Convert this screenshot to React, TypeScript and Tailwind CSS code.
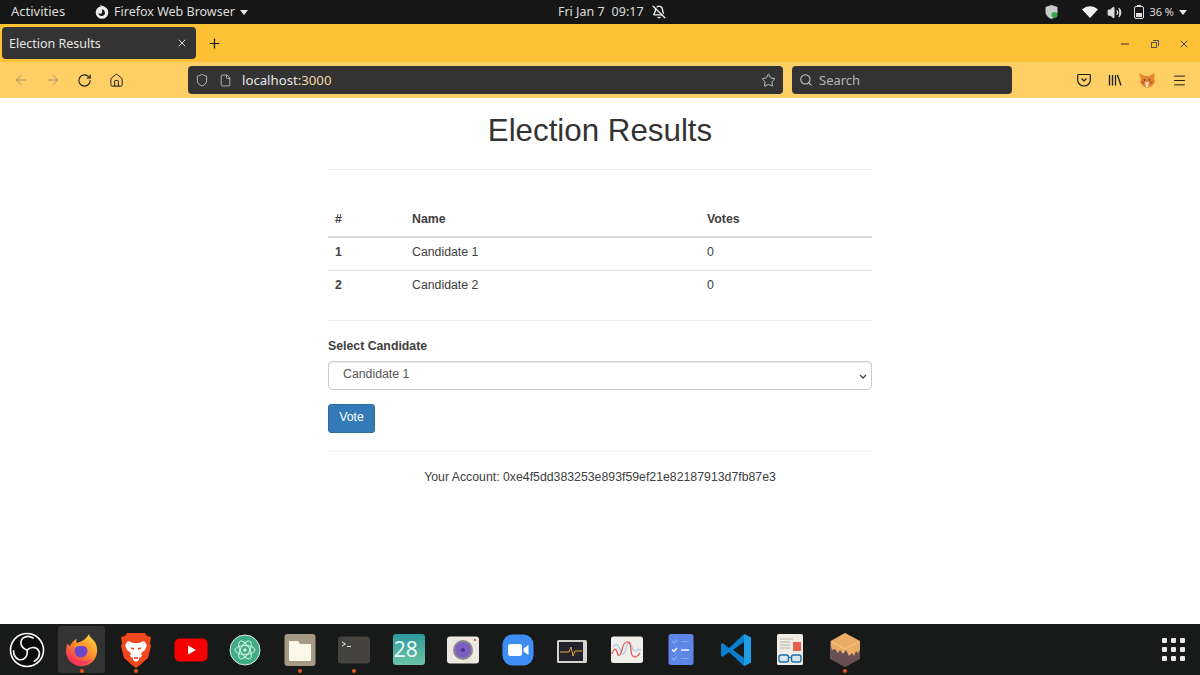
import { ArrowLeft, ArrowRight, RotateCw, Home, Shield, File, Star, Search, Menu, X, Plus, BellOff, Volume2 } from 'lucide-react';

const ObsIcon = () => (
    <svg width="40" height="40" viewBox="0 0 40 40" fill="none">
        <circle cx="20" cy="20" r="16.5" fill="#0c0c0c" stroke="#fff" strokeWidth="1.6" />
        <g stroke="#f2f2f2" strokeWidth="1.7" strokeLinecap="round">
            <path d="M20 20c-6-2-8-8-4-12 3-2 7-2 10 0" />
            <path d="M20 20c-6-2-8-8-4-12 3-2 7-2 10 0" transform="rotate(120 20 20)" />
            <path d="M20 20c-6-2-8-8-4-12 3-2 7-2 10 0" transform="rotate(240 20 20)" />
        </g>
    </svg>
);

const FirefoxIcon = () => (
    <svg width="40" height="40" viewBox="0 0 40 40" fill="none">
        <defs>
            <linearGradient id="ffOuter" x1="30" y1="6" x2="8" y2="34" gradientUnits="userSpaceOnUse">
                <stop stopColor="#ffd23a" />
                <stop offset="0.45" stopColor="#ff8a2b" />
                <stop offset="1" stopColor="#f0245f" />
            </linearGradient>
        </defs>
        <path d="M27 4c1 4 3 4 6 8 3 5 3 13-1 18-4 5-10 7-15 6C10 35 4 29 4 21c0-4 1-6 2-8 0 2 1 3 2 3 1-3 4-6 7-7-1 2-1 3 0 4 3-1 9-3 12-9z" fill="url(#ffOuter)" />
        <circle cx="19" cy="21" r="6.500" fill="#6c46c8" />
        <path d="M12 17c2-4 7-6 11-4 3 1 5 4 5 7-2-3-5-4-8-4-3 0-5 0-8 1z" fill="#ff9a2e" />
        <path d="M8 24c1 6 6 10 12 10 4 0 8-2 10-5-3 2-7 3-11 2-5-1-9-3-11-7z" fill="#f4395f" />
    </svg>
);

const BraveIcon = () => (
    <svg width="40" height="40" viewBox="0 0 40 40" fill="none">
        <path d="M11 3h18l2 3 4 1-1 6 1 3-3 12-8 7-4 3-4-3-8-7-3-12 1-3-1-6 4-1z" fill="#f1491d" />
        <path d="M12 11l5 2h6l5-2 3 4-2 5-4 3 1 3-3 2v2l-3 2-3-2v-2l-3-2 1-3-4-3-2-5z" fill="#fff" />
        <path d="M15 18l3 1M25 18l-3 1M18 28h4" stroke="#f1491d" strokeWidth="1.400" />
    </svg>
);

const YoutubeIcon = () => (
    <svg width="40" height="40" viewBox="0 0 40 40" fill="none">
        <rect x="3.500" y="8.500" width="33" height="23" rx="5" fill="#f60002" />
        <path d="M17 15.500l8 4.500-8 4.500z" fill="#fff" />
    </svg>
);

const AtomIcon = () => (
    <svg width="40" height="40" viewBox="0 0 40 40" fill="none">
        <circle cx="20" cy="20" r="15" fill="#3fae86" stroke="#d8ebe2" strokeWidth="1" />
        <g stroke="#d5efe3" strokeWidth="1" fill="none">
            <ellipse cx="20" cy="20" rx="10" ry="4.500" />
            <ellipse cx="20" cy="20" rx="10" ry="4.500" transform="rotate(60 20 20)" />
            <ellipse cx="20" cy="20" rx="10" ry="4.500" transform="rotate(120 20 20)" />
        </g>
        <circle cx="20" cy="20" r="1.600" fill="#e6f6ee" />
    </svg>
);

const FilesIcon = () => (
    <svg width="40" height="40" viewBox="0 0 40 40" fill="none">
        <rect x="4.500" y="4" width="31" height="32" rx="3" fill="#a69a87" />
        <path d="M9 11h9l2 3h11v16a1 1 0 01-1 1H10a1 1 0 01-1-1z" fill="#fbf8ea" />
    </svg>
);

const TerminalIcon = () => (
    <svg width="40" height="40" viewBox="0 0 40 40" fill="none">
        <rect x="4" y="6.500" width="32" height="27" rx="3" fill="#45433f" />
        <path d="M8 12l3.500 2L8 16" stroke="#e8e8e8" strokeWidth="1" />
        <path d="M13 16.500h4" stroke="#e8e8e8" strokeWidth="1" />
    </svg>
);

const CalendarIcon = () => (
    <div className="w-[32px] h-[31px] rounded-[3px] bg-gradient-to-b from-[#2a9a9c] to-[#6cc4a4] flex items-center pl-[1px] overflow-hidden">
        <span className="text-[#eaf6f2] text-[21px] leading-none font-['Noto_Sans',sans-serif]">28</span>
    </div>
);

const CameraIcon = () => (
    <svg width="40" height="40" viewBox="0 0 40 40" fill="none">
        <rect x="4" y="6.500" width="32" height="27" rx="3" fill="#ece8e2" />
        <circle cx="20" cy="20" r="10" fill="#8d8a88" />
        <circle cx="20" cy="20" r="8" fill="#7d5fc4" />
        <circle cx="20" cy="20" r="2" fill="#4d3590" />
        <circle cx="32" cy="10" r="1" fill="#e8383d" />
    </svg>
);

const ZoomIcon = () => (
    <svg width="40" height="40" viewBox="0 0 40 40" fill="none">
        <rect x="4.500" y="4.500" width="31" height="31" rx="10" fill="#3e8df3" />
        <rect x="10" y="14" width="14" height="12" rx="2.500" fill="#fff" />
        <path d="M25.500 18.500l5-3.500v10l-5-3.500z" fill="#fff" />
    </svg>
);

const MonitorIcon = () => (
    <svg width="40" height="40" viewBox="0 0 40 40" fill="none">
        <rect x="5" y="10" width="30" height="23" rx="1.500" fill="#d5d3cd" />
        <rect x="7" y="12" width="24" height="19" fill="#23232b" />
        <path d="M8 22h9l2-5 2 9 2-5h7" stroke="#e0a542" strokeWidth="1" />
    </svg>
);

const GraphIcon = () => (
    <svg width="40" height="40" viewBox="0 0 40 40" fill="none">
        <rect x="4" y="6.500" width="32" height="26.500" rx="2.500" fill="#f0eeea" />
        <path d="M6 17c3-4 5-3 7 2s3 7 5 3 1-9 4-9 3 8 6 8 3-3 6-1" stroke="#9fc9e6" strokeWidth="1.100" />
        <path d="M5 24c2-6 4-6 5-2s2 5 4 1 1-10 6-11 3 10 5 13 5 3 8-2" stroke="#e3514c" strokeWidth="1.200" />
    </svg>
);

const TasksIcon = () => (
    <svg width="40" height="40" viewBox="0 0 40 40" fill="none">
        <rect x="7.500" y="4" width="25" height="31" rx="2.500" fill="#5d86e6" />
        <path d="M11 11l2 2 3-3.500M11 28l2 2 3-3.500" stroke="#86a6ee" strokeWidth="1.200" />
        <path d="M11 19.500l2 2 3-3.500" stroke="#fff" strokeWidth="1.300" />
        <path d="M20 11.500h8M20 28.500h8" stroke="#86a6ee" strokeWidth="1.200" />
        <path d="M20 20h8" stroke="#fff" strokeWidth="1.400" />
    </svg>
);

const VscodeIcon = () => (
    <svg width="40" height="40" viewBox="0 0 40 40" fill="none">
        <path d="M28 4l7 3.500v25L28 36 13 22l-6.500 5L5 25.500V14.500L6.500 13l6.500 5z" fill="#0a7fd0" />
        <path d="M28 12L17 20l11 8z" fill="#181919" />
        <path d="M28 4l7 3.500v25L28 36z" fill="#1f9ce6" />
    </svg>
);

const DocsIcon = () => (
    <svg width="40" height="40" viewBox="0 0 40 40" fill="none">
        <rect x="7" y="4" width="26" height="31" rx="1.500" fill="#efece6" />
        <path d="M10 9h13M10 12h10M10 15h10M10 18h10" stroke="#b8b3a8" strokeWidth="1" />
        <rect x="23" y="12" width="8" height="9" fill="#e8604c" />
        <rect x="9" y="25" width="9.500" height="7" rx="2" fill="#d9e5ee" stroke="#1e6fa8" strokeWidth="1.400" />
        <rect x="21.500" y="25" width="9.500" height="7" rx="2" fill="#d9e5ee" stroke="#1e6fa8" strokeWidth="1.400" />
        <path d="M18.500 27.500h3" stroke="#1e6fa8" strokeWidth="1.200" />
    </svg>
);

const CubeIcon = () => (
    <svg width="40" height="40" viewBox="0 0 40 40" fill="none">
        <path d="M20 3l15 8v18l-15 8-15-8V11z" fill="#685054" />
        <path d="M20 3l15 8v9l-2 3-2-2-2 5-2-3-3 3-3-6-3 4-3-4-2 3-3-4-3 1-1-4V11z" fill="#e9ad66" />
        <path d="M7 12l13 7 13-7" stroke="#f5cf96" strokeWidth="0.800" />
    </svg>
);

const FoxIcon = () => (
    <svg width="16" height="16" viewBox="0 0 16 16" fill="none">
        <path d="M0 1l6 3h4l6-3-1 6 1 3-3 4-3 1.500H7L4 14l-3-4 1-3z" fill="#e88332" />
        <path d="M2 9l4 1-2 3zM14 9l-4 1 2 3z" fill="#c9641f" />
        <path d="M6 10h4l-1 5H7z" fill="#f2dcc4" />
        <circle cx="5.500" cy="8" r="0.800" fill="#333" />
        <circle cx="10.500" cy="8" r="0.800" fill="#333" />
    </svg>
);

const dockItems = [
    { icon: <ObsIcon />, running: false },
    { icon: <FirefoxIcon />, running: true, active: true },
    { icon: <BraveIcon />, running: true },
    { icon: <YoutubeIcon />, running: false },
    { icon: <AtomIcon />, running: false },
    { icon: <FilesIcon />, running: true },
    { icon: <TerminalIcon />, running: true },
    { icon: <CalendarIcon />, running: false },
    { icon: <CameraIcon />, running: false },
    { icon: <ZoomIcon />, running: false },
    { icon: <MonitorIcon />, running: false },
    { icon: <GraphIcon />, running: false },
    { icon: <TasksIcon />, running: false },
    { icon: <VscodeIcon />, running: false },
    { icon: <DocsIcon />, running: false },
    { icon: <CubeIcon />, running: true },
];

const TopBar = () => (
    <div className="h-[24px] shrink-0 bg-[#161616] text-[#dcdcdc] text-[12.500px] flex items-center font-['Noto_Sans',sans-serif]">
        <span className="ml-[11px] w-[84px] text-[13px]">Activities</span>
        <svg width="14" height="14" viewBox="0 0 14 14" fill="none">
            <circle cx="7" cy="7.500" r="6.300" fill="#eee" />
            <path d="M6.500 4.500a3.200 3.200 0 11-3 3.500c1 1 3 1 3.500 0 .5-1 0-2.500-.5-3.500z" fill="#161616" />
            <path d="M5 0l4 1.500 1 3-3-.5z" fill="#eee" />
        </svg>
        <span className="ml-[5px]">Firefox Web Browser</span>
        <span className="ml-[5px] w-0 h-0 border-x-[4px] border-x-transparent border-t-[5px] border-t-[#e8e8e8]" />
        <span className="ml-[310px]">Fri Jan 7</span>
        <span className="ml-[7px]">09:17</span>
        <BellOff size={14} className="ml-[8px] text-[#eee]" strokeWidth={2.400} />
        <div className="ml-auto flex items-center">
            <svg width="14" height="16" viewBox="0 0 14 16" fill="none">
                <path d="M6.500 1l6 2v5c0 3-3 6-6 7-3-1-6-4-6-7V3z" fill="#c9c9c9" />
                <circle cx="9.500" cy="11" r="3" fill="#2fa84f" />
            </svg>
            <svg className="ml-[23px]" width="16" height="12" viewBox="0 0 16 12" fill="none">
                <path d="M0 3.500C4.500-1 11.500-1 16 3.500L8 12z" fill="#eee" />
            </svg>
            <Volume2 size={15} fill="currentColor" className="ml-[9px] text-[#ddd]" />
            <svg className="ml-[12px]" width="10" height="14" viewBox="0 0 10 14" fill="none">
                <rect x="0.500" y="1.500" width="9" height="12" rx="1.500" stroke="#ddd" />
                <rect x="3" y="0" width="4" height="1.500" fill="#ddd" />
                <rect x="2" y="8" width="6" height="4" fill="#ddd" />
            </svg>
            <span className="ml-[5px] text-[11px]">36 %</span>
            <span className="ml-[5px] mr-[13px] w-0 h-0 border-x-[4px] border-x-transparent border-t-[5px] border-t-[#e8e8e8]" />
        </div>
    </div>
);

const TabBar = () => (
    <div className="h-[38px] shrink-0 bg-[#fdc136] flex items-center font-['Noto_Sans',sans-serif]">
        <div className="ml-[2px] w-[194px] h-[32px] rounded-[4px] bg-[#333333] flex items-center pl-[7px] pr-[8px] pt-[2px] text-[#e6e6e6] text-[12.500px]">
            <span>Election Results</span>
            <X size={12} className="ml-auto -mt-[2px] text-[#d8d8d8]" />
        </div>
        <Plus size={15} strokeWidth={1.900} className="ml-[11px] mt-[1px] text-[#111]" />
        <div className="ml-auto mr-[10px] mt-[2px] flex items-center text-[#555]">
            <span className="w-[8px] h-[1.500px] bg-[#a0703a]" />
            <span className="relative ml-[22px] w-[8px] h-[8px]">
                <span className="absolute left-0 bottom-0 w-[6px] h-[6px] border border-[#555]" />
                <span className="absolute right-0 top-0 w-[6px] h-[6px] border-t border-r border-[#555]" />
            </span>
            <X size={12} className="ml-[19px] text-[#444]" />
        </div>
    </div>
);

const ToolBar = () => (
    <div className="h-[36px] shrink-0 bg-[#fdcf64] flex items-center font-['Noto_Sans',sans-serif]">
        <div className="w-[188px] flex items-center pl-[13px]">
            <ArrowLeft size={16} strokeWidth={1.400} className="text-[#a8926a]" />
            <ArrowRight size={16} strokeWidth={1.400} className="ml-[16px] text-[#a8926a]" />
            <RotateCw size={15} strokeWidth={1.800} className="ml-[16px] text-[#222]" />
            <Home size={15} strokeWidth={1.600} className="ml-[17px] text-[#222]" />
        </div>
        <div className="w-[595px] h-[28px] rounded-[4px] bg-[#333333] flex items-center pl-[7px] pr-[7px] text-[#e8e8e8] text-[13.200px]">
            <Shield size={14} strokeWidth={1.500} className="text-[#ccc]" />
            <File size={13} strokeWidth={1.500} className="ml-[10px] text-[#ccc]" />
            <span className="ml-[10px] mt-[1px]">
                localhost<span className="text-[#f1d9a8]">:3000</span>
            </span>
            <Star size={15} strokeWidth={1.500} className="ml-auto text-[#ccc]" />
        </div>
        <div className="ml-[9px] w-[220px] h-[28px] rounded-[4px] bg-[#333333] flex items-center pl-[7px] text-[#b5b5b5] text-[13px]">
            <Search size={14} strokeWidth={1.800} className="text-[#ccc]" />
            <span className="ml-[6px] mt-[1px]">Search</span>
        </div>
        <div className="ml-auto flex items-center mr-[13px] text-[#222]">
            <svg width="14" height="14" viewBox="0 0 14 14" fill="none" stroke="currentColor" strokeWidth="1.200">
                <path d="M1.500 1.500h11a.8.8 0 01.8.8V7a6.300 6 0 01-12.600 0V2.300a.8.8 0 01.8-.8z" />
                <path d="M4.500 5.500L7 8l2.500-2.500" />
            </svg>
            <svg className="ml-[17px]" width="14" height="14" viewBox="0 0 14 14" fill="none" stroke="currentColor" strokeWidth="1.300">
                <path d="M1.500 2v10.500M4.500 2v10.500M7.500 2v10.500M9.500 2l3.500 10.500" />
            </svg>
            <span className="ml-[17px]"><FoxIcon /></span>
            <Menu size={15} strokeWidth={1.600} className="ml-[17px]" />
        </div>
    </div>
);

const candidates = [
    { id: 1, name: 'Candidate 1', votes: 0, rowClass: 'h-[33px] border-b border-[#dddddd]', cellClass: 'pb-[3px]' },
    { id: 2, name: 'Candidate 2', votes: 0, rowClass: 'h-[31px]', cellClass: 'pb-[1px]' },
];

const Page = () => (
    <div className="flex-1 bg-white text-[#404040] text-[12.300px] font-['Liberation_Sans',Arial,sans-serif] overflow-hidden">
        <div className="w-[544px] mx-auto">
            <h1 className="text-center text-[31.300px] leading-[34px] mt-[16px] text-[#333333]">Election Results</h1>
            <div className="mt-[21px] border-t border-[#eeeeee]" />
            <table className="mt-[32px] w-full table-fixed">
                <thead>
                    <tr className="border-b-2 border-[#dddddd] text-left">
                        <th className="w-[76px] h-[35px] px-[7px] font-bold">#</th>
                        <th className="w-[295px] px-[8px] font-bold">Name</th>
                        <th className="px-[8px] font-bold">Votes</th>
                    </tr>
                </thead>
                <tbody>
                    {candidates.map((candidate) => (
                        <tr key={candidate.id} className={candidate.rowClass}>
                            <th className={`px-[7px] text-left font-bold ${candidate.cellClass}`}>{candidate.id}</th>
                            <td className={`px-[8px] ${candidate.cellClass}`}>{candidate.name}</td>
                            <td className={`px-[8px] ${candidate.cellClass}`}>{candidate.votes}</td>
                        </tr>
                    ))}
                </tbody>
            </table>
            <div className="mt-[19px] border-t border-[#eeeeee]" />
            <label className="block mt-[17px] font-bold leading-[16px]">Select Candidate</label>
            <div className="mt-[7px] h-[29px] rounded-[4px] border border-[#cccccc] flex items-center pl-[14px] pr-[3px] text-[#555555] shadow-[inset_0_1px_1px_rgba(0,0,0,0.075)]">
                <span className="-mt-[3px]">Candidate 1</span>
                <svg className="ml-auto" width="10" height="10" viewBox="0 0 10 10" fill="none">
                    <path d="M2 4l3 3 3-3" stroke="#444" strokeWidth="1.300" />
                </svg>
            </div>
            <button className="mt-[14px] block w-[47px] h-[29px] rounded-[3px] bg-[#337ab7] border border-[#2e6da4] text-white pb-[3px]">Vote</button>
            <div className="mt-[18px] border-t border-[#eeeeee]" />
            <p className="mt-[17px] text-center leading-[16px]">Your Account: 0xe4f5dd383253e893f59ef21e82187913d7fb87e3</p>
        </div>
    </div>
);

const Dock = () => (
    <div className="h-[51px] shrink-0 bg-[#181919] flex items-center">
        {dockItems.map((item, i) => (
            <div key={i} className="relative w-[54.500px] h-[51px] flex items-center justify-center">
                {item.active && <div className="absolute left-[3px] top-[2px] w-[47px] h-[47px] rounded-[3px] bg-[#333333]" />}
                <div className="relative">{item.icon}</div>
                {item.running && <span className="absolute left-1/2 -translate-x-1/2 bottom-[2px] w-[4px] h-[4px] rounded-full bg-[#e95420]" />}
            </div>
        ))}
        <div className="ml-auto mr-[15px] grid grid-cols-3 gap-x-[4px] gap-y-[4px]">
            {Array.from({ length: 9 }).map((_, i) => (
                <span key={i} className="w-[5px] h-[5px] rounded-[1px] bg-[#e8e8e8]" />
            ))}
        </div>
    </div>
);

const App = () => {
    return (
        <div className="w-[1200px] h-[675px] flex flex-col overflow-hidden">
            <TopBar />
            <TabBar />
            <ToolBar />
            <Page />
            <Dock />
        </div>
    );
};

export default App;
